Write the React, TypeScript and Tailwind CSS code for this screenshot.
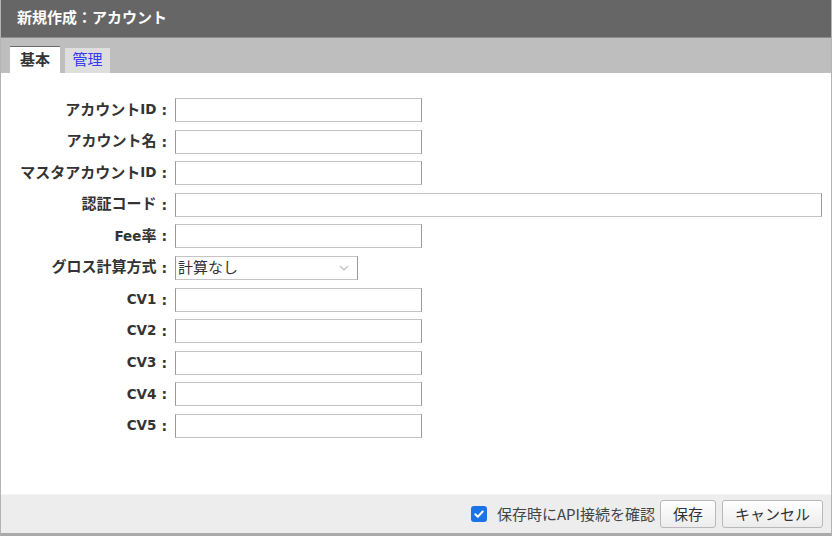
import React from "react";

const labelFont = { fontFamily: '"DejaVu Sans", "Noto Sans CJK JP", sans-serif' };

function Mixed({ text }: { text: string }) {
  const parts = text.match(/[\x00-\x7f]+|[^\x00-\x7f]+/g) || [];
  return (
    <>
      {parts.map((p, i) =>
        /^[\x00-\x7f]+$/.test(p) ? (
          <span key={i} className="text-[13.5px]">{p}</span>
        ) : (
          <span key={i} className="text-[15px]">{p}</span>
        )
      )}
    </>
  );
}

function Row({ label, wide, children }: { label: string; wide?: boolean; children?: React.ReactNode }) {
  return (
    <div className="flex items-center h-[24px]">
      <div className="w-[174px] shrink-0 flex justify-end items-center pr-[8px] font-bold text-[#333] leading-none" style={labelFont}>
        <Mixed text={label} />
        <span className="ml-[5px] text-[14px]">:</span>
      </div>
      {children ?? (
        <div className={`${wide ? "w-[647px]" : "w-[247px]"} h-[24px] bg-white border border-t-[#c4c4c4] border-b-[#c4c4c4] border-l-[#9a9a9a] border-r-[#9a9a9a]`} />
      )}
    </div>
  );
}

export default function App() {
  const rows: { label: string; wide?: boolean }[] = [
    { label: "アカウントID" },
    { label: "アカウント名" },
    { label: "マスタアカウントID" },
    { label: "認証コード", wide: true },
    { label: "Fee率" },
  ];
  const cvs = ["CV1", "CV2", "CV3", "CV4", "CV5"];
  return (
    <div className="w-[832px] h-[536px] flex flex-col bg-white border-l border-r border-[#b4b4b4] border-b-[3px] border-b-[#aaaaaa] overflow-hidden" style={{ fontFamily: '"Noto Sans CJK JP", sans-serif' }}>
      <div className="h-[38px] shrink-0 bg-[#666666] border-b border-[#8c8c8c] flex items-center pl-[16px]">
        <span className="text-white font-bold text-[15px]" style={labelFont}>新規作成：アカウント</span>
      </div>
      <div className="h-[35px] shrink-0 bg-[#bebebe] flex items-end pl-[9px] gap-[5px]">
        <div className="w-[50px] h-[27px] bg-white border-t border-[#6a6a6a] flex items-center justify-center text-[15px] text-[#333] font-bold" style={labelFont}>基本</div>
        <div className="w-[45px] h-[25px] bg-[#dedede] flex items-center justify-center text-[15px] text-[#3838f0]" style={labelFont}>管理</div>
      </div>
      <div className="flex-1 flex flex-col gap-y-[7.6px] pt-[25px]">
        {rows.map((r) => (
          <Row key={r.label} label={r.label} wide={r.wide} />
        ))}
        <Row label="グロス計算方式">
          <div className="w-[183px] h-[24px] bg-white border border-t-[#c4c4c4] border-b-[#c4c4c4] border-l-[#9a9a9a] border-r-[#9a9a9a] flex items-center justify-between pl-[2px] pr-[8px]">
            <span className="text-[15px] text-[#333]" style={labelFont}>計算なし</span>
            <svg width="10" height="6" viewBox="0 0 10 6" fill="none">
              <path d="M1 1l4 4 4-4" stroke="#c0c0c0" strokeWidth="1.2" />
            </svg>
          </div>
        </Row>
        {cvs.map((c) => (
          <Row key={c} label={c} />
        ))}
      </div>
      <div className="h-[39px] shrink-0 bg-[#ededed] border-t border-[#f4f4f4] flex items-center justify-end pr-[8px]">
        <div className="w-[16px] h-[16px] rounded-[3px] bg-[#1a73e8] flex items-center justify-center mr-[10px]">
          <svg width="12" height="12" viewBox="0 0 12 12" fill="none">
            <path d="M2.3 6.2l2.5 2.5 4.9-5.2" stroke="white" strokeWidth="2" strokeLinecap="round" strokeLinejoin="round" />
          </svg>
        </div>
        <span className="text-[15px] text-[#444] mr-[5px]">保存時にAPI接続を確認</span>
        <button className="w-[56px] h-[28px] rounded-[3px] border border-[#b8b8b8] bg-gradient-to-b from-white to-[#ececec] text-[15px] text-[#333] mr-[6px]">保存</button>
        <button className="w-[101px] h-[28px] rounded-[3px] border border-[#b8b8b8] bg-gradient-to-b from-white to-[#ececec] text-[15px] text-[#333]">キャンセル</button>
      </div>
    </div>
  );
}
